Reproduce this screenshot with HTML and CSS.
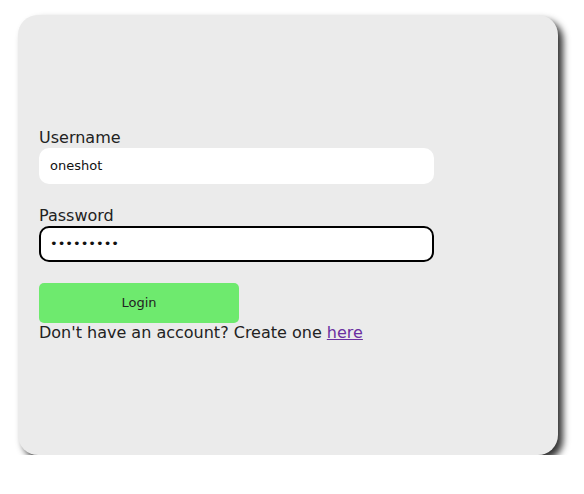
FILE: index.html
```html
<!DOCTYPE html>
<html>
<head>
<meta charset="utf-8">
<link rel="stylesheet" href="styles.css">
</head>
<body>
<div class="card">
  <form class="form">
    <label class="label" for="u">Username</label>
    <input class="field" id="u" type="text" value="oneshot">
    <label class="label label-gap" for="p">Password</label>
    <input class="field field-active" id="p" type="password" value="oneshot12" autofocus>
    <button class="btn" type="button">Login</button>
    <p class="note">Don't have an account? Create one <a class="link" href="#">here</a></p>
  </form>
</div>
</body>
</html>
```
FILE: styles.css
```css
html, body {
  margin: 0;
  padding: 0;
  background: #ffffff;
}
body {
  padding: 15px 0 0 18px;
  font-family: "Century Gothic", "DejaVu Sans", sans-serif;
  color: #1a1a1a;
}
.card {
  width: 540px;
  height: 440px;
  box-sizing: border-box;
  background: #ebebeb;
  border-radius: 20px;
  box-shadow: 5px 5px 7px rgba(0, 0, 0, 0.8);
  display: flex;
  flex-direction: column;
  justify-content: center;
  padding: 0 21px;
}
.form {
  display: flex;
  flex-direction: column;
  align-items: flex-start;
}
.label {
  font-size: 16px;
  line-height: 20px;
  color: #222;
}
.label-gap {
  margin-top: 22px;
}
.field {
  width: 395px;
  height: 36px;
  box-sizing: border-box;
  border: 2px solid transparent;
  border-radius: 10px;
  background: #ffffff;
  padding: 0 9px;
  font-family: inherit;
  font-size: 13px;
  color: #111;
  outline: none;
}
.field-active {
  border-color: #000;
}
.btn {
  margin-top: 21px;
  width: 200px;
  height: 40px;
  border: none;
  border-radius: 5px;
  background: #6eea6e;
  font-family: inherit;
  font-size: 13px;
  color: #222;
}
.note {
  margin: 0;
  font-size: 16px;
  line-height: 20px;
  color: #222;
}
.link {
  color: #6a2fa0;
}
```
